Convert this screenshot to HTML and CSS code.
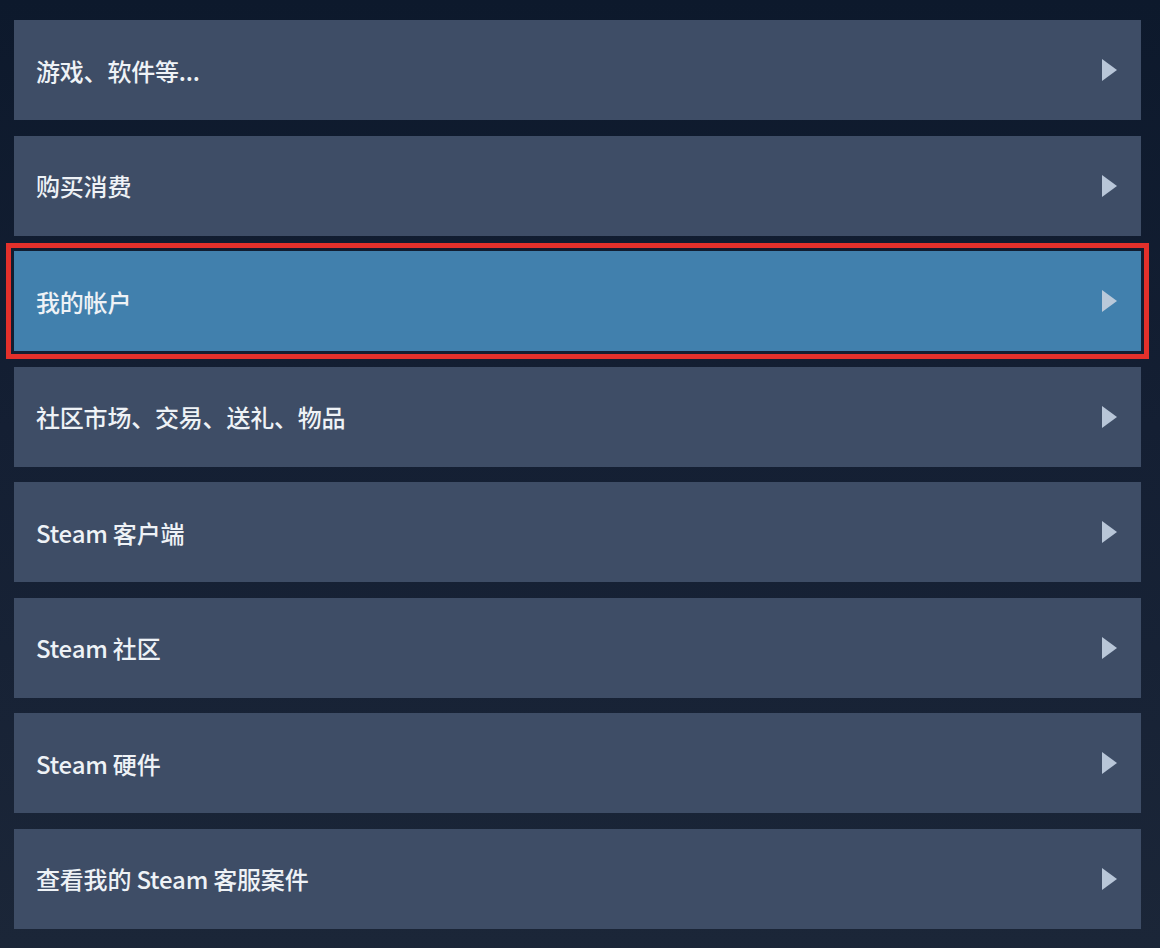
FILE: index.html
```html
<!DOCTYPE html>
<html lang="zh-CN">
<head>
<meta charset="utf-8">
<title>Steam 客服</title>
<link rel="stylesheet" href="styles.css">
</head>
<body>
<div class="menu">
  <a class="row"><span class="label">游戏、软件等...</span><svg class="arrow" viewBox="0 0 15 22"><polygon points="0,0 15,11 0,22"/></svg></a>
  <a class="row"><span class="label">购买消费</span><svg class="arrow" viewBox="0 0 15 22"><polygon points="0,0 15,11 0,22"/></svg></a>
  <a class="row active"><span class="label">我的帐户</span><svg class="arrow" viewBox="0 0 15 22"><polygon points="0,0 15,11 0,22"/></svg></a>
  <a class="row"><span class="label">社区市场、交易、送礼、物品</span><svg class="arrow" viewBox="0 0 15 22"><polygon points="0,0 15,11 0,22"/></svg></a>
  <a class="row"><span class="label">Steam 客户端</span><svg class="arrow" viewBox="0 0 15 22"><polygon points="0,0 15,11 0,22"/></svg></a>
  <a class="row"><span class="label">Steam 社区</span><svg class="arrow" viewBox="0 0 15 22"><polygon points="0,0 15,11 0,22"/></svg></a>
  <a class="row"><span class="label">Steam 硬件</span><svg class="arrow" viewBox="0 0 15 22"><polygon points="0,0 15,11 0,22"/></svg></a>
  <a class="row"><span class="label">查看我的 Steam 客服案件</span><svg class="arrow" viewBox="0 0 15 22"><polygon points="0,0 15,11 0,22"/></svg></a>
</div>
</body>
</html>
```
FILE: styles.css
```css
html, body {
  margin: 0;
  padding: 0;
}
body {
  width: 1160px;
  height: 948px;
  overflow: hidden;
  background: linear-gradient(180deg, #0d192c 0%, #141f33 45%, #1b2638 100%);
  font-family: "Noto Sans CJK SC", "Noto Sans", sans-serif;
}
.menu {
  display: flex;
  flex-direction: column;
  gap: 15.5px;
  padding: 20px 0 0 14px;
}
.row {
  box-sizing: border-box;
  width: 1127px;
  height: 100px;
  display: flex;
  align-items: center;
  justify-content: space-between;
  padding: 0 24px 0 22px;
  background: #3e4d66;
  color: #eef2f6;
  text-decoration: none;
}
.row.active {
  background: #4180ad;
  outline: 5px solid #e3302b;
  outline-offset: 3px;
}
.label {
  font-size: 24px;
  font-weight: 500;
  letter-spacing: -0.2px;
}
.arrow {
  width: 15px;
  height: 22px;
  fill: #b8c6d8;
}
.row.active .arrow {
  fill: #b9c9da;
}
```
